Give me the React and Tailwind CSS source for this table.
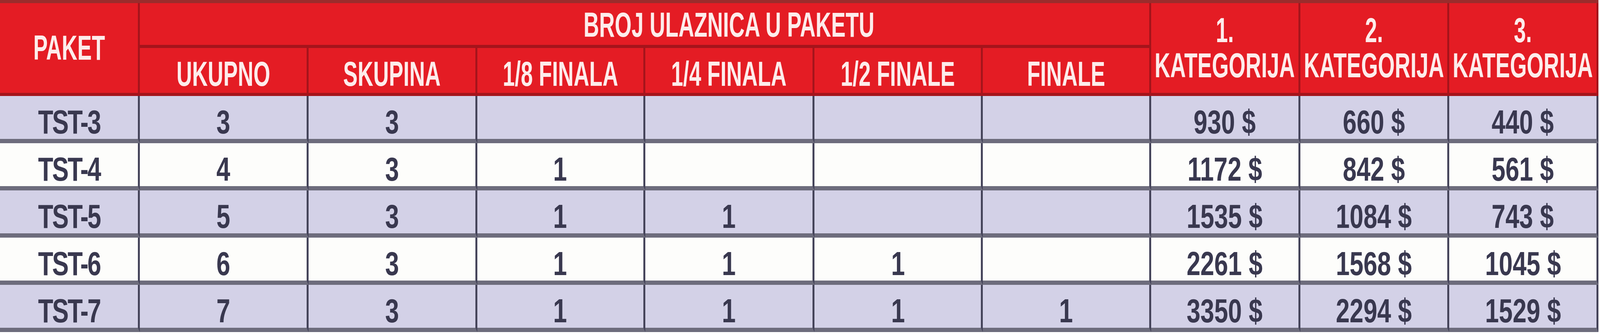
import React, { useEffect, useState } from "react";

const rows = [
  { id: "TST-3", cells: ["3", "3", "", "", "", ""], prices: ["930 $", "660 $", "440 $"] },
  { id: "TST-4", cells: ["4", "3", "1", "", "", ""], prices: ["1172 $", "842 $", "561 $"] },
  { id: "TST-5", cells: ["5", "3", "1", "1", "", ""], prices: ["1535 $", "1084 $", "743 $"] },
  { id: "TST-6", cells: ["6", "3", "1", "1", "1", ""], prices: ["2261 $", "1568 $", "1045 $"] },
  { id: "TST-7", cells: ["7", "3", "1", "1", "1", "1"], prices: ["3350 $", "2294 $", "1529 $"] },
];

const stages = ["UKUPNO", "SKUPINA", "1/8 FINALA", "1/4 FINALA", "1/2 FINALE", "FINALE"];

// the table is drawn for a 5515x856 frame; text is sized from the height and
// squeezed sideways when the window is narrower than that shape
function useSqueeze() {
  const calc = () =>
    typeof window === "undefined" ? 1 : window.innerWidth / window.innerHeight / (5515 / 856);
  const [sx, setSx] = useState(calc);
  useEffect(() => {
    const onResize = () => setSx(calc());
    window.addEventListener("resize", onResize);
    return () => window.removeEventListener("resize", onResize);
  }, []);
  return sx;
}

const head =
  "flex min-w-0 items-center justify-center bg-[#e41c24] border-r-[0.145vw] border-b-[0.935vh] border-[#a5141b] text-[#fdeceb] font-['Liberation_Sans',Arial,sans-serif] font-bold text-[10.5vh] leading-none";

function Txt({ children, sx }) {
  return (
    <span className="inline-block shrink-0 whitespace-nowrap" style={{ transform: `scaleX(${sx})` }}>
      {children}
    </span>
  );
}

function Cell({ children, shade, last, first, sx }) {
  return (
    <div
      className={
        "flex min-w-0 items-center justify-center pt-[2.8vh] border-r-[0.145vw] border-r-[#45445a] border-b-[1.4vh] border-b-[#6d6c7c] text-[#39384f] font-['Liberation_Sans',Arial,sans-serif] font-bold text-[10vh] leading-none " +
        (shade ? "bg-[#d3d1e7] " : "bg-[#fdfdfb] ") +
        (last ? "border-b-[#5f5e72] " : "") +
        (first ? "tracking-[-0.45vh]" : "")
      }
    >
      <Txt sx={sx}>{children}</Txt>
    </div>
  );
}

export default function App() {
  const sx = useSqueeze();
  const hx = 0.83 * sx;
  return (
    <div className="w-full h-screen overflow-hidden bg-white pr-[0.11vw] pb-[0.6vh]">
      <div className="grid h-full w-full grid-cols-[minmax(0,482fr)_minmax(0,582fr)_minmax(0,581fr)_minmax(0,579fr)_minmax(0,584fr)_minmax(0,580fr)_minmax(0,580fr)_minmax(0,514fr)_minmax(0,514fr)_minmax(0,513fr)] grid-rows-[minmax(0,115fr)_minmax(0,123fr)_minmax(0,121fr)_minmax(0,121fr)_minmax(0,121fr)_minmax(0,121fr)_minmax(0,121fr)] border-t-[0.935vh] border-t-[#9a2c2c]">
        <div className={head + " row-span-2"}>
          <Txt sx={hx}>PAKET</Txt>
        </div>
        <div className={head + " col-span-6 pl-[10.55vw] pt-[0.5vh]"}>
          <Txt sx={hx}>BROJ ULAZNICA U PAKETU</Txt>
        </div>
        {["1.", "2.", "3."].map((n) => (
          <div key={n} className={head + " row-span-2 flex-col leading-[9.6vh]"}>
            <Txt sx={hx}>{n}</Txt>
            <Txt sx={hx}>KATEGORIJA</Txt>
          </div>
        ))}
        {stages.map((s) => (
          <div key={s} className={head + " pt-[2.3vh]"}>
            <Txt sx={hx}>{s}</Txt>
          </div>
        ))}
        {rows.map((r, i) => {
          const shade = i % 2 === 0;
          const last = i === rows.length - 1;
          return (
            <React.Fragment key={r.id}>
              <Cell shade={shade} last={last} first sx={sx}>
                {r.id}
              </Cell>
              {r.cells.map((c, j) => (
                <Cell key={j} shade={shade} last={last} sx={sx}>
                  {c}
                </Cell>
              ))}
              {r.prices.map((p, j) => (
                <Cell key={"p" + j} shade={shade} last={last} sx={sx}>
                  {p}
                </Cell>
              ))}
            </React.Fragment>
          );
        })}
      </div>
    </div>
  );
}
